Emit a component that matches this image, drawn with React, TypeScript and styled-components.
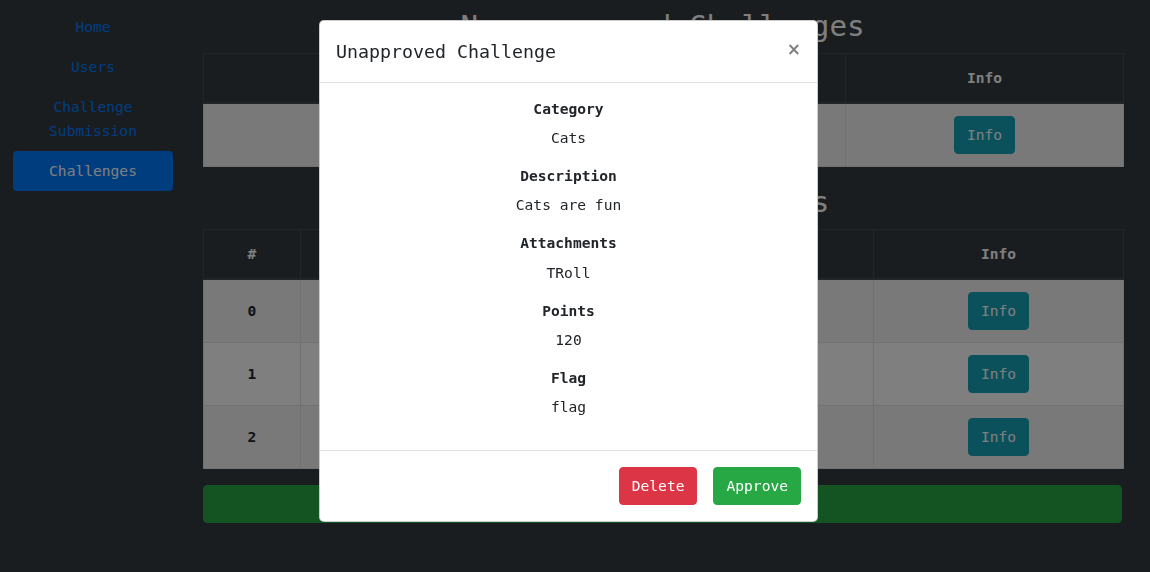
import React from "react";
import styled, { createGlobalStyle, css } from "styled-components";

const GlobalStyle = createGlobalStyle`
  html, body {
    margin: 0;
    padding: 0;
    height: 100%;
    overflow: hidden;
    background: #343a40;
  }
  body {
    font-family: "DejaVu Sans Mono", "Liberation Mono", monospace;
    font-size: 14.6px;
    line-height: 24px;
    color: #212529;
  }
  * { box-sizing: border-box; }
`;

const Page = styled.div`
  display: flex;
  align-items: flex-start;
  gap: 30px;
  padding: 7px 28px 0 13px;
`;

const Sidebar = styled.nav`
  width: 160px;
  flex: none;
  display: flex;
  flex-direction: column;
`;

const NavLink = styled.a<{ $active?: boolean }>`
  display: block;
  padding: 8px 16px;
  text-align: center;
  color: #007bff;
  text-decoration: none;
  border-radius: 4px;
  ${(p) =>
    p.$active &&
    css`
      background: #007bff;
      color: #fff;
    `}
`;

const Main = styled.main`
  flex: 1;
  min-width: 0;
`;

const Heading = styled.h2`
  margin: 0 0 8px;
  text-align: center;
  font-size: 29.2px;
  line-height: 38px;
  font-weight: normal;
  color: #fff;
`;

const Table = styled.table`
  width: 100%;
  table-layout: fixed;
  border-collapse: collapse;
  margin-bottom: 16px;
  background: #fff;
`;

const HeadCell = styled.th<{ $w: number }>`
  width: ${(p) => p.$w}px;
  background: #343a40;
  color: #fff;
  border: 1px solid #454d55;
  border-bottom-width: 2px;
  padding: 12px;
  font-weight: bold;
  text-align: center;
  vertical-align: bottom;
`;

const Row = styled.tr`
  &:nth-child(odd) {
    background: rgba(0, 0, 0, 0.05);
  }
`;

const Cell = styled.td`
  border: 1px solid #dee2e6;
  padding: 12px;
  text-align: center;
  vertical-align: middle;
`;

const RowHead = styled.th`
  border: 1px solid #dee2e6;
  padding: 12px;
  text-align: center;
  vertical-align: middle;
  font-weight: bold;
`;

const Button = styled.button<{ $variant: "info" | "success" | "danger" }>`
  font: inherit;
  line-height: 24px;
  padding: 6px 12px;
  border-radius: 4px;
  color: #fff;
  cursor: pointer;
  ${(p) =>
    p.$variant === "info"
      ? css`
          background: #17a2b8;
          border: 1px solid #17a2b8;
        `
      : p.$variant === "success"
      ? css`
          background: #28a745;
          border: 1px solid #28a745;
        `
      : css`
          background: #dc3545;
          border: 1px solid #dc3545;
        `}
`;

const BlockButton = styled(Button)`
  display: block;
  width: 100%;
`;

const Backdrop = styled.div`
  position: fixed;
  inset: 0;
  background: rgba(0, 0, 0, 0.5);
`;

const ModalLayer = styled.div`
  position: fixed;
  inset: 0;
  padding: 20px 0 0 319px;
`;

const Dialog = styled.div`
  width: 499px;
  background: #fff;
  border: 1px solid rgba(0, 0, 0, 0.2);
  border-radius: 5px;
  display: flex;
  flex-direction: column;
`;

const ModalHeader = styled.div`
  display: flex;
  align-items: flex-start;
  padding: 16px;
  border-bottom: 1px solid #dee2e6;
`;

const ModalTitle = styled.h5`
  margin: 0;
  font-size: 18.3px;
  line-height: 29px;
  font-weight: normal;
  color: #212529;
`;

const Close = styled.button`
  margin: -16px -16px -16px auto;
  padding: 16px;
  background: transparent;
  border: 0;
  font-family: "DejaVu Sans", sans-serif;
  font-size: 17px;
  line-height: 24px;
  font-weight: bold;
  color: #000;
  opacity: 0.5;
  text-shadow: 0 1px 0 #fff;
  cursor: pointer;
`;

const ModalBody = styled.div`
  padding: 16px 16px 15px;
  text-align: center;
`;

const Label = styled.div`
  font-weight: bold;
  line-height: 19.2px;
  margin-bottom: 8px;
`;

const Value = styled.p`
  margin: 0 0 16px;
`;

const ModalFooter = styled.div`
  display: flex;
  justify-content: flex-end;
  gap: 16px;
  padding: 16px;
  border-top: 1px solid #dee2e6;
`;

const pending = [{ name: "Cats", category: "Cats" }];
const approved = [
  { name: "Warmup", category: "Misc", points: 50 },
  { name: "Crypto 1", category: "Crypto", points: 100 },
  { name: "Web 1", category: "Web", points: 150 },
];

const details: [string, string][] = [
  ["Category", "Cats"],
  ["Description", "Cats are fun"],
  ["Attachments", "TRoll"],
  ["Points", "120"],
  ["Flag", "flag"],
];

export default function App() {
  return (
    <>
      <GlobalStyle />
      <Page>
        <Sidebar>
          <NavLink href="#">Home</NavLink>
          <NavLink href="#">Users</NavLink>
          <NavLink href="#">Challenge Submission</NavLink>
          <NavLink href="#" $active>
            Challenges
          </NavLink>
        </Sidebar>
        <Main>
          <Heading>Non-approved Challenges</Heading>
          <Table>
            <thead>
              <tr>
                <HeadCell $w={321}>Name</HeadCell>
                <HeadCell $w={321}>Category</HeadCell>
                <HeadCell $w={278}>Info</HeadCell>
              </tr>
            </thead>
            <tbody>
              {pending.map((c) => (
                <Row key={c.name}>
                  <Cell>{c.name}</Cell>
                  <Cell>{c.category}</Cell>
                  <Cell>
                    <Button $variant="info">Info</Button>
                  </Cell>
                </Row>
              ))}
            </tbody>
          </Table>
          <Heading>Approved Challenges</Heading>
          <Table>
            <thead>
              <tr>
                <HeadCell $w={97}>#</HeadCell>
                <HeadCell $w={192}>Name</HeadCell>
                <HeadCell $w={192}>Category</HeadCell>
                <HeadCell $w={189}>Points</HeadCell>
                <HeadCell $w={250}>Info</HeadCell>
              </tr>
            </thead>
            <tbody>
              {approved.map((c, i) => (
                <Row key={c.name}>
                  <RowHead>{i}</RowHead>
                  <Cell>{c.name}</Cell>
                  <Cell>{c.category}</Cell>
                  <Cell>{c.points}</Cell>
                  <Cell>
                    <Button $variant="info">Info</Button>
                  </Cell>
                </Row>
              ))}
            </tbody>
          </Table>
          <BlockButton $variant="success">Submit a Challenge</BlockButton>
        </Main>
      </Page>
      <Backdrop />
      <ModalLayer>
        <Dialog role="dialog">
          <ModalHeader>
            <ModalTitle>Unapproved Challenge</ModalTitle>
            <Close aria-label="Close">×</Close>
          </ModalHeader>
          <ModalBody>
            {details.map(([label, value]) => (
              <React.Fragment key={label}>
                <Label>{label}</Label>
                <Value>{value}</Value>
              </React.Fragment>
            ))}
          </ModalBody>
          <ModalFooter>
            <Button $variant="danger">Delete</Button>
            <Button $variant="success">Approve</Button>
          </ModalFooter>
        </Dialog>
      </ModalLayer>
    </>
  );
}
